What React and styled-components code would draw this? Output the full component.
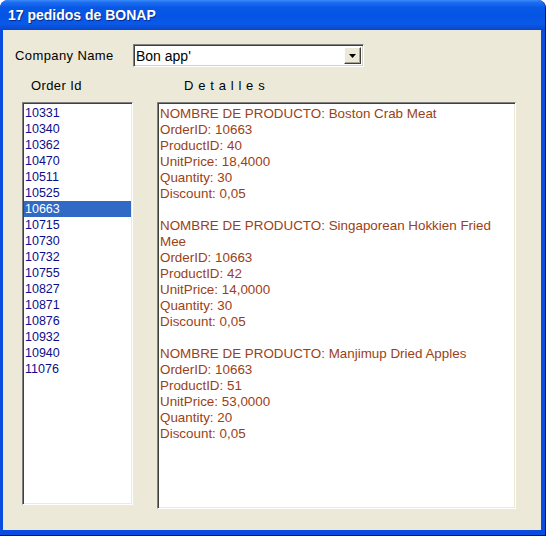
import styled, { createGlobalStyle } from "styled-components";

const orders = [
  "10331", "10340", "10362", "10470", "10511", "10525", "10663", "10715",
  "10730", "10732", "10755", "10827", "10871", "10876", "10932", "10940", "11076",
];

const products = [
  { name: "Boston Crab Meat", id: 40, price: "18,4000", qty: 30 },
  { name: "Singaporean Hokkien Fried Mee", id: 42, price: "14,0000", qty: 30 },
  { name: "Manjimup Dried Apples", id: 51, price: "53,0000", qty: 20 },
];

const GlobalStyle = createGlobalStyle`
  html, body {
    margin: 0;
    padding: 0;
    background: #ffffff;
  }
`;

function App() {
  return (
    <>
      <GlobalStyle />
      <Window>
        <TitleBar>17 pedidos de BONAP</TitleBar>
        <Body>
          <CompanyRow>
            <Label>Company Name</Label>
            <Combo>
              <ComboText>Bon app'</ComboText>
              <ComboButton>
                <svg width="7" height="4" viewBox="0 0 7 4">
                  <path d="M0 0h7L3.5 4z" fill="#000" />
                </svg>
              </ComboButton>
            </Combo>
          </CompanyRow>
          <HeadRow>
            <ListHead>Order Id</ListHead>
            <DetailHead>D e t a l l e s</DetailHead>
          </HeadRow>
          <PanelRow>
            <ListBox>
              {orders.map((o) => (
                <Item key={o} selected={o === "10663"}>
                  {o}
                </Item>
              ))}
            </ListBox>
            <DetailBox>
              {products.map((p) => (
                <Product key={p.id}>
                  <Line>{`NOMBRE DE PRODUCTO: ${p.name}`}</Line>
                  <Line>OrderID: 10663</Line>
                  <Line>{`ProductID: ${p.id}`}</Line>
                  <Line>{`UnitPrice: ${p.price}`}</Line>
                  <Line>{`Quantity: ${p.qty}`}</Line>
                  <Line>Discount: 0,05</Line>
                </Product>
              ))}
            </DetailBox>
          </PanelRow>
        </Body>
      </Window>
    </>
  );
}

const Window = styled.div`
  width: 546px;
  height: 536px;
  box-sizing: border-box;
  display: flex;
  flex-direction: column;
  background: #0a4be0;
  border-radius: 8px 8px 0 0;
  border-right: 1px solid #00138c;
  border-bottom: 1px solid #00138c;
  overflow: hidden;
`;

const TitleBar = styled.div`
  height: 30px;
  flex: 0 0 30px;
  display: flex;
  align-items: center;
  padding-left: 8px;
  color: #ffffff;
  font-family: "Liberation Sans", Arial, sans-serif;
  font-weight: bold;
  font-size: 14px;
  text-shadow: 1px 1px 0 #0b2a8a;
  background: linear-gradient(
    to bottom,
    #3d8cf7 0%,
    #1e6ef2 8%,
    #0858e6 25%,
    #0554e3 55%,
    #0a5ae8 80%,
    #0946c8 100%
  );
`;

const Body = styled.div`
  flex: 1;
  margin: 0 4px 5px 3px;
  background: #ece9d8;
  display: flex;
  flex-direction: column;
  padding: 14px 0 0 12px;
  font-family: "Liberation Sans", Arial, sans-serif;
`;

const CompanyRow = styled.div`
  display: flex;
  align-items: center;
  height: 23px;
`;

const Label = styled.div`
  width: 118px;
  font-size: 13px;
  letter-spacing: 0.4px;
  color: #000;
`;

const Combo = styled.div`
  width: 231px;
  height: 23px;
  box-sizing: border-box;
  display: flex;
  align-items: center;
  background: #fff;
  border-top: 1px solid #808080;
  border-left: 1px solid #808080;
  border-right: 1px solid #fff;
  border-bottom: 1px solid #fff;
  box-shadow: inset 1px 1px 0 #404040, inset -1px -1px 0 #d4d0c8;
`;

const ComboText = styled.div`
  flex: 1;
  padding-left: 2px;
  font-size: 14px;
  color: #000;
`;

const ComboButton = styled.div`
  width: 17px;
  height: 17px;
  margin-right: 2px;
  box-sizing: border-box;
  display: flex;
  align-items: center;
  justify-content: center;
  background: #ece9d8;
  border-top: 1px solid #fff;
  border-left: 1px solid #fff;
  border-right: 1px solid #404040;
  border-bottom: 1px solid #404040;
  box-shadow: inset -1px -1px 0 #a8a598;
`;

const HeadRow = styled.div`
  display: flex;
  margin-top: 10px;
  height: 16px;
  align-items: center;
  font-size: 13px;
  color: #000;
`;

const ListHead = styled.div`
  margin-left: 16px;
  width: 153px;
  letter-spacing: 0.4px;
`;

const DetailHead = styled.div`
  letter-spacing: 0.6px;
  white-space: pre;
`;

const PanelRow = styled.div`
  display: flex;
  align-items: flex-start;
  margin-top: 9px;
  padding-left: 7px;
  gap: 24px;
`;

const sunken = `
  box-sizing: border-box;
  background: #fff;
  border-top: 1px solid #808080;
  border-left: 1px solid #808080;
  border-right: 1px solid #fff;
  border-bottom: 1px solid #fff;
  box-shadow: inset 1px 1px 0 #404040, inset -1px -1px 0 #ece9d8;
`;

const ListBox = styled.div`
  ${sunken}
  width: 111px;
  height: 403px;
  padding: 2px 1px 0 1px;
`;

const Item = styled.div`
  height: 16px;
  line-height: 16px;
  padding-left: 1px;
  font-size: 12.5px;
  color: ${(p) => (p.selected ? "#ffffff" : "#0c0c8c")};
  background: ${(p) => (p.selected ? "#316ac5" : "transparent")};
`;

const DetailBox = styled.div`
  ${sunken}
  width: 359px;
  height: 407px;
  padding: 3px 8px 0 2px;
  font-size: 13.4px;
  line-height: 16px;
  color: #9c3f16;
`;

const Product = styled.div`
  margin-bottom: 16px;
`;

const Line = styled.div`
  line-height: 16px;
`;

export default App;
